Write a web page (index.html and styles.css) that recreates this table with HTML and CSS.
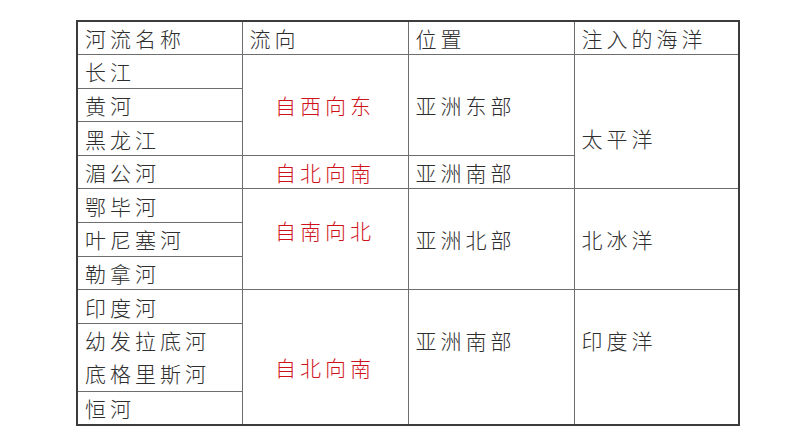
FILE: index.html
```html
<!DOCTYPE html>
<html lang="zh-CN">
<head>
<meta charset="utf-8">
<title>河流</title>
<link rel="stylesheet" href="styles.css">
</head>
<body>
<div class="page">
<table class="rivers">
  <colgroup>
    <col class="c1"><col class="c2"><col class="c3"><col class="c4">
  </colgroup>
  <tr><td>河流名称</td><td>流向</td><td>位置</td><td>注入的海洋</td></tr>
  <tr><td>长江</td><td class="dir" rowspan="3">自西向东</td><td rowspan="3">亚洲东部</td><td rowspan="4" class="pacific">太平洋</td></tr>
  <tr><td>黄河</td></tr>
  <tr><td>黑龙江</td></tr>
  <tr><td>湄公河</td><td class="dir">自北向南</td><td>亚洲南部</td></tr>
  <tr><td>鄂毕河</td><td class="dir up" rowspan="3">自南向北</td><td rowspan="3">亚洲北部</td><td rowspan="3">北冰洋</td></tr>
  <tr><td>叶尼塞河</td></tr>
  <tr><td>勒拿河</td></tr>
  <tr><td>印度河</td><td class="dir down" rowspan="4">自北向南</td><td rowspan="4" class="high">亚洲南部</td><td rowspan="4" class="high">印度洋</td></tr>
  <tr><td rowspan="2" class="two">幼发拉底河<br>底格里斯河</td></tr>
  <tr></tr>
  <tr><td>恒河</td></tr>
</table>
</div>
</body>
</html>
```
FILE: styles.css
```css
html, body {
  margin: 0;
  padding: 0;
  background: #ffffff;
}
.page {
  padding: 20px 0 0 76px;
}
.rivers {
  border-collapse: collapse;
  table-layout: fixed;
  width: 664px;
  border: 2px solid #3c3c3c;
  font-family: "Noto Sans CJK SC", "Noto Sans", sans-serif;
  font-weight: 300;
  font-size: 21px;
  letter-spacing: 4px;
  color: #2e2e2e;
}
.c1 { width: 165px; }
.c2 { width: 166px; }
.c3 { width: 166px; }
.c4 { width: 165px; }
.rivers tr {
  height: 33.6px;
}
.rivers td {
  border: 1px solid #6e6e6e;
  padding: 0 0 0 7px;
  line-height: 30px;
  vertical-align: middle;
  white-space: nowrap;
}
.rivers td.dir {
  color: #d0121b;
  text-align: center;
  padding-left: 0;
}
.rivers td.pacific { padding-top: 33px; }
.rivers td.up { padding-bottom: 18px; }
.rivers td.down { padding-top: 20px; }
.rivers td.high { padding-bottom: 34px; }
.rivers td.two { line-height: 33.4px; }
```
